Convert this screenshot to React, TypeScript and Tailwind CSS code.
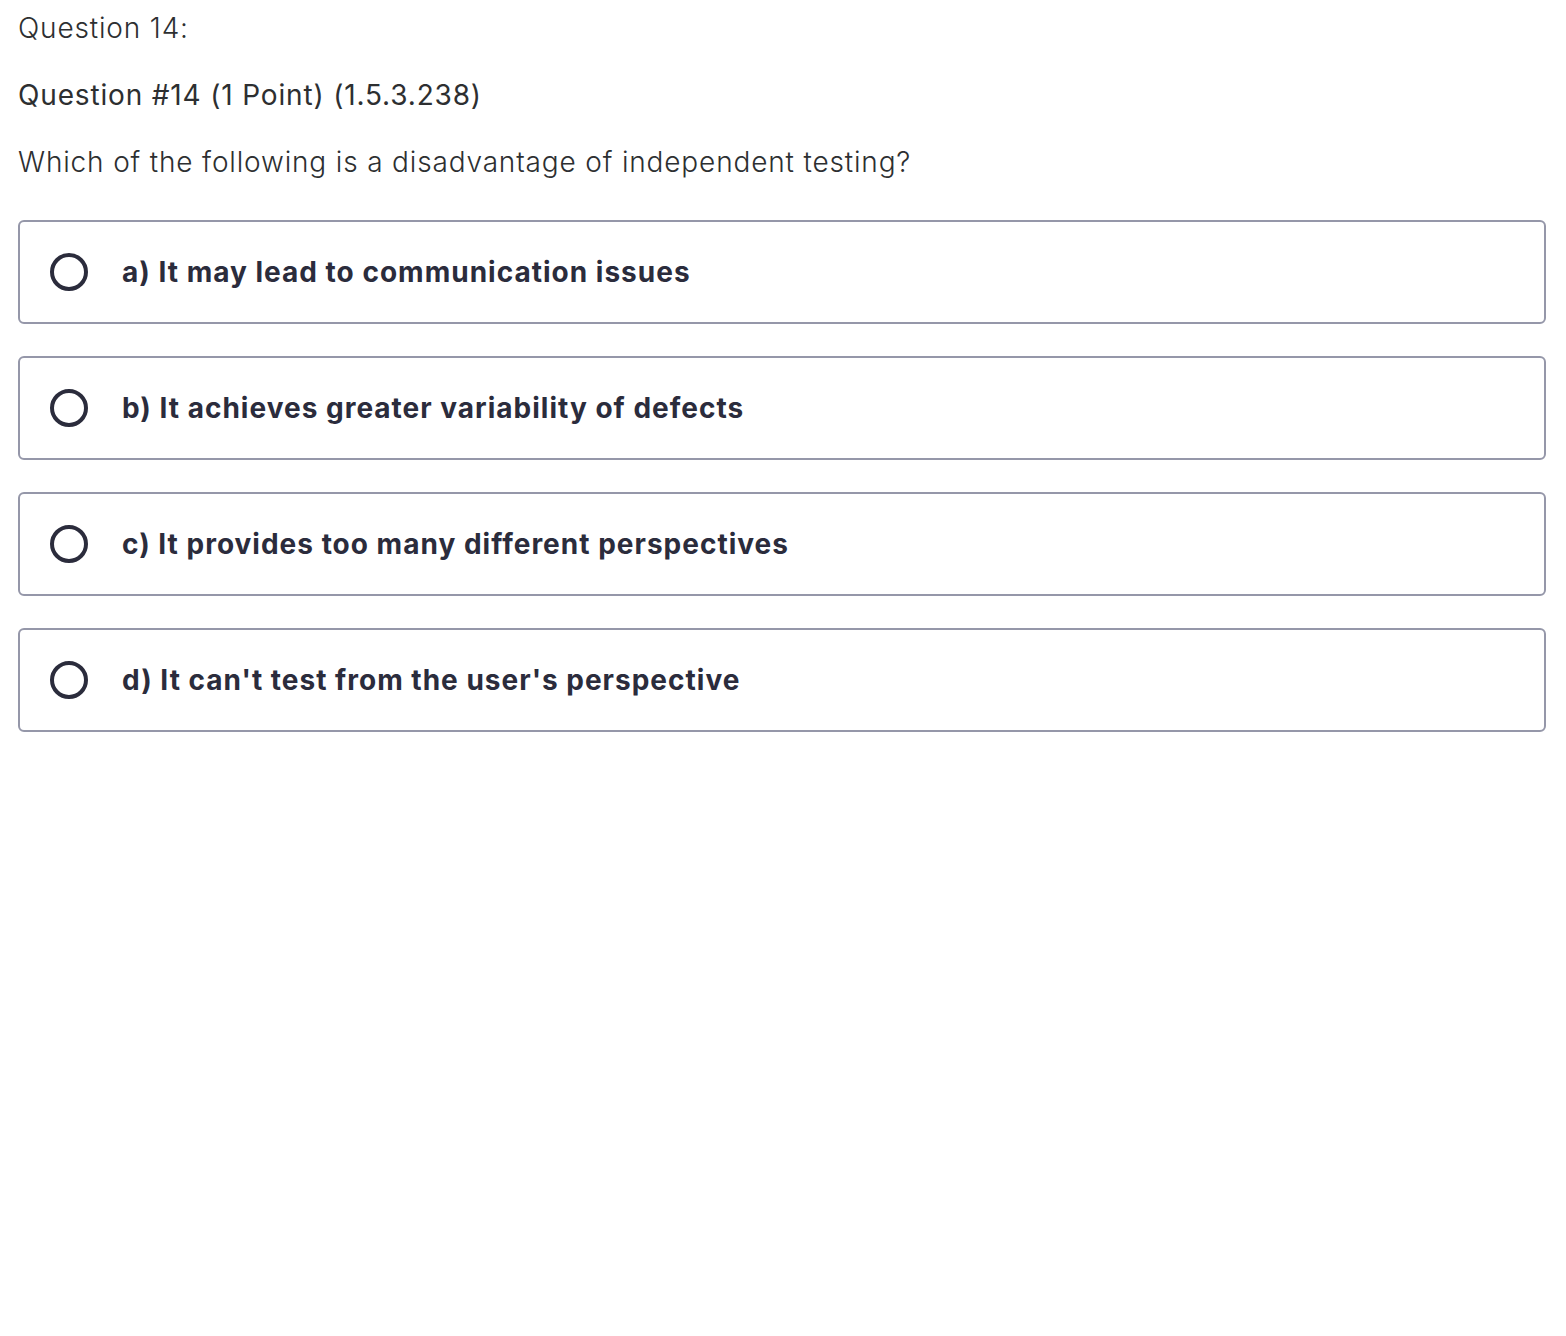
export default function App() {
  const options = [
    'a) It may lead to communication issues',
    'b) It achieves greater variability of defects',
    'c) It provides too many different perspectives',
    "d) It can't test from the user's perspective",
  ]

  return (
    <div className="min-h-[1336px] bg-white pl-[18px] pr-[20px] pt-[8px] text-[#2d2f31]" style={{ fontFamily: 'Inter, "Noto Sans", sans-serif' }}>
      <p className="text-[28px] font-light leading-[40px] tracking-[0.03em]">Question 14:</p>
      <p className="mt-[27px] text-[28px] font-normal leading-[40px] tracking-[0.03em]">Question #14 (1 Point) (1.5.3.238)</p>
      <p className="mt-[27px] text-[28px] font-light leading-[40px] tracking-[0.03em]">
        Which of the following is a disadvantage of independent testing?
      </p>

      <div className="mt-[38px] flex flex-col gap-[32px]">
        {options.map((o) => (
          <div
            key={o}
            className="flex h-[104px] items-center rounded-[6px] border-2 border-[#9597a9] pl-[30px]"
          >
            <span className="h-[38px] w-[38px] shrink-0 rounded-full border-[4px] border-[#2b2c3c]" />
            <span className="ml-[34px] text-[28px] font-bold leading-[40px] tracking-[0.036em] text-[#2b2c3c]">{o}</span>
          </div>
        ))}
      </div>
    </div>
  )
}
